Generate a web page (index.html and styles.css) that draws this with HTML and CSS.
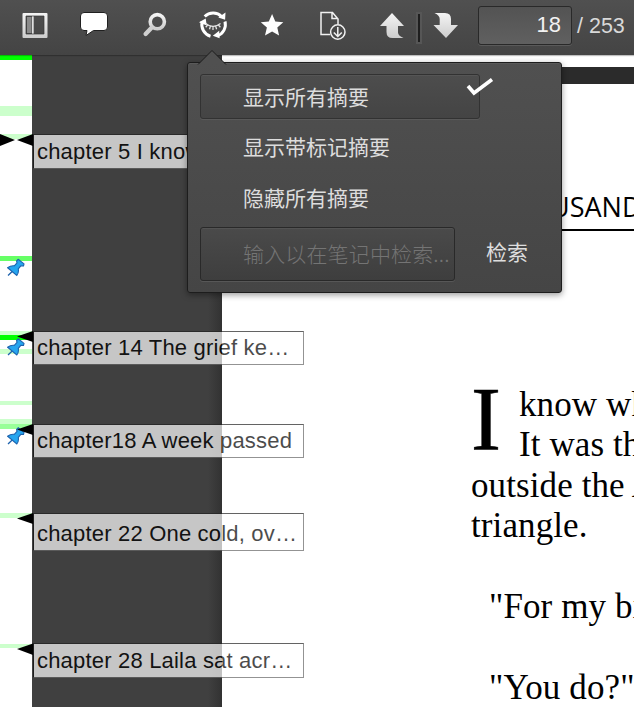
FILE: index.html
```html
<!DOCTYPE html>
<html lang="zh-CN">
<head>
<meta charset="utf-8">
<title>Reader</title>
<link rel="stylesheet" href="styles.css">
</head>
<body>
<svg width="0" height="0" class="defs">
  <defs>
    <linearGradient id="metal" x1="0" y1="0" x2="0" y2="1"><stop offset="0" stop-color="#f4f4f4"/><stop offset="1" stop-color="#cdcdcd"/></linearGradient>
    <symbol id="pin" viewBox="0 0 18 18"><path d="M6 12.200L1 17" stroke="#1d62ad" stroke-width="1.300"/><path d="M11.200 .8L17 5.400L16.500 7.500L13.800 7.300L11.300 10.500Q12 14 9.800 17L.600 9.200Q3.800 6.800 7.300 7.300L10 4.400L9.600 2.500Z" fill="#25a5ef" stroke="#1d62ad" stroke-width="1.100"/></symbol>
  </defs>
</svg>
<div class="app">
  <header class="toolbar">
    <svg class="icon" viewBox="0 0 30 30"><path fill-rule="evenodd" fill="url(#metal)" d="M3.500 2h23a1 1 0 0 1 1 1v23a1 1 0 0 1-1 1h-23a1 1 0 0 1-1-1V3a1 1 0 0 1 1-1zM6 5v18h18V5z"/><path d="M7 6h4.500v16H7z" fill="#8b8b8b"/><path d="M12 5h1.700v18H12z" fill="#e0e0e0"/><path d="M6 23V5h18v18z" fill="none" stroke="#373737" stroke-width=".7"/></svg>
    <svg class="icon comment" viewBox="0 0 30 30"><path d="M5 1.500h20q3.500 0 3.500 3.500v11q0 3.500-3.500 3.500H14.500L7 24.500 8 19.500H5q-3.500 0-3.500-3.500V5q0-3.500 3.500-3.500z" fill="#fff" stroke="#202020"/></svg>
    <svg class="icon search" viewBox="0 0 30 30"><circle cx="17.300" cy="10.700" r="7.100" fill="none" stroke="url(#metal)" stroke-width="3.600"/><path d="M11.800 16.500L5.600 23" stroke="#cfcfcf" stroke-width="4.300" stroke-linecap="round"/></svg>
    <svg class="icon eye" viewBox="0 0 30 30"><g fill="none" stroke="#fff" stroke-width="3"><path d="M6.700 5.500A12 12 0 0 1 23.700 5.700"/><path d="M27 10.500A12 12 0 0 1 19.500 24.800"/><path d="M12.500 25.300A12 12 0 0 1 4.300 10.500"/></g><path d="M27.500 1.500l-.4 7.300-6.800-2.200zM14.800 24.800l6.400-5 .4 7.500zM1 11.200l6.700-3.700 1 7z" fill="#fff"/><path d="M7.700 12.500Q15 18.500 22.500 12.500M9.700 14l-2 2.300M12.400 15.300l-.9 3M15 15.700V19M17.700 15.300l.9 3M20.400 14l2 2.300" fill="none" stroke="#e4e4e4" stroke-width="1.300"/></svg>
    <svg class="icon" viewBox="0 0 30 30"><path d="M15.100 3l3.200 7.400 8 .8-6 5.400 1.800 8-7-4.100-7.100 4.100 1.900-8-6.100-5.400 8-.8z" fill="#fff"/></svg>
    <svg class="icon doc" viewBox="0 0 30 30"><g fill="none" stroke="#f1f1f1" stroke-width="1.500"><path d="M12 23.500H3V1.500h11.500L20 8v5M14 1.500v6h6"/><circle cx="19.800" cy="21" r="7.200"/><path d="M19.800 16v9.200M15.800 21.500l4 4 4-4"/></g></svg>
    <svg class="icon up" viewBox="0 0 30 30"><path d="M15 2L27 15h-6v6.500q0 3 5.500 5.500H15.500Q9.500 27 9.500 21V15H3z" fill="url(#metal)"/></svg>
    <span class="divider"></span>
    <svg class="icon down" viewBox="0 0 30 30"><path d="M4.500 2H15q6 0 6 6v6h7L16 27 3.500 14h6.200V8q0-3.500-5.200-6z" fill="url(#metal)"/></svg>
    <div class="page-number">18</div>
    <span class="page-total">/ 253</span>
  </header>
  <main class="viewer">
    <aside class="strip">
      <svg class="marks" viewBox="0 0 32 652"><g fill="#ccffcc"><path d="M0 51h32v10H0zM0 79h32v5H0zM0 276h32v4H0zM0 294h32v5H0zM0 346h32v4H0zM0 364h32v5H0zM0 458h32v5H0zM0 589h32v4H0z"/></g><path d="M0 0h32v5H0zM0 280h32v5H0z" fill="#0f0"/><path d="M0 201h32v5H0z" fill="#66ff66"/><path d="M0 369h32v5H0z" fill="#99ff99"/><use href="#pin" x="7" y="203.500" width="18" height="18"/><use href="#pin" x="7" y="283" width="18" height="18"/><use href="#pin" x="7" y="372" width="18" height="18"/></svg>
    </aside>
    <section class="desk"></section>
    <article class="page">
      <div class="page-edge"></div>
      <div class="running-head">USAND</div>
      <p class="lead"><span class="dropcap">I</span><span class="line">know wh</span><span class="line">It was th</span><span class="line">outside the A</span><span class="line">triangle.</span></p>
      <p>"For my bi</p>
      <p>"You do?"</p>
    </article>
    <svg class="pointers" viewBox="0 0 33 652"><path d="M0 79L15 85 0 91zM33 79L17 85 33 91zM33 276L17 281.500 33 287zM33 369L17 374.500 33 380zM33 458L17 463.500 33 469zM33 588.500L17 594 33 600z"/></svg>
    <div class="note n5">chapter 5 I know</div>
    <div class="note n14">chapter 14 The grief ke…</div>
    <div class="note n18">chapter18 A week passed</div>
    <div class="note n22">chapter 22 One cold, ov…</div>
    <div class="note n28">chapter 28 Laila sat acr…</div>
  </main>
  <div class="menu">
    <svg class="arrow" viewBox="0 0 32 16"><path d="M1 15.500L15 1.500 29 15.500" fill="#505050" stroke="#1d1d1d"/></svg>
    <div class="item selected">显示所有摘要<svg class="check" viewBox="0 0 28 20"><path d="M2 9l6 7L26 2.500" fill="none" stroke="#fff" stroke-width="3.600"/></svg></div>
    <div class="item">显示带标记摘要</div>
    <div class="item">隐藏所有摘要</div>
    <div class="query"><div class="field">输入以在笔记中检索...</div><span class="submit">检索</span></div>
  </div>
</div>
</body>
</html>
```

FILE: styles.css
```css
* { box-sizing: border-box; }
body { margin: 0; background: #fff; overflow: hidden; font-family: "Liberation Sans", Arial, sans-serif; }
.defs { position: absolute; }
.app { position: relative; width: 634px; height: 707px; overflow: hidden; }

.toolbar { position: relative; z-index: 1; display: flex; align-items: center; height: 55px; padding-left: 20px; background: linear-gradient(#505050, #444); box-shadow: 0 1px 1px rgba(0,0,0,.25); }
.icon { flex: none; width: 30px; height: 30px; margin-top: -3px; margin-right: 29px; }
.comment { margin-right: 31px; }
.search { margin-right: 28px; }
.eye { margin-right: 29px; }
.doc { margin-left: 2px; }
.up { margin-right: 9px; }
.divider { flex: none; width: 6px; height: 32px; border: 2px solid #565656; background: #1e1e1e; margin-right: 8px; }
.down { margin-right: 18px; }
.page-number { flex: none; width: 94px; height: 39px; margin-top: -4px; padding-right: 10px; border: 1px solid #292929; border-radius: 3px; background: linear-gradient(#535353, #606060); box-shadow: 0 1px 0 #5a5a5a; color: #f2f2f2; font-size: 22px; line-height: 36px; text-align: right; }
.page-total { margin: -4px 0 0 5px; color: #d9d9d9; font-size: 21.500px; line-height: 30px; white-space: nowrap; }

.viewer { position: relative; display: flex; height: 652px; }
.strip { flex: none; width: 32px; background: #fff; }
.marks { display: block; width: 32px; height: 652px; }
.desk { flex: none; width: 190px; background: linear-gradient(90deg, transparent 176px, #323232), #404040; }
.pointers { position: absolute; left: 0; top: 0; width: 33px; height: 652px; }

.page { flex: none; width: 412px; overflow: hidden; background: #fff; color: #000; font: 35px/40.400px "Liberation Serif", "Times New Roman", serif; letter-spacing: .1px; white-space: nowrap; }
.page-edge { height: 17px; margin-top: 12px; background: #2b2b2b; }
.running-head { height: 147px; padding: 105px 0 0 328px; border-bottom: 2px solid #000; font: 27px/36px "Open Sans", "Noto Sans", sans-serif; letter-spacing: 0; }
.page p { margin: 40.400px 0 0; padding-left: 267px; }
.page .lead { margin-top: 154px; padding-left: 249px; }
.dropcap { float: left; width: 48px; height: 80px; font-size: 90px; line-height: 69px; -webkit-text-stroke: .6px #000; }
.line { display: block; }

.note { position: absolute; left: 33px; width: 271px; height: 34px; padding: 0 3px; border: 1px solid #666; border-top-color: #222; border-left-color: #111; background: #fff; opacity: .7; color: #000; font-size: 22px; line-height: 32px; letter-spacing: .19px; white-space: nowrap; overflow: hidden; }
.n5 { top: 79px; height: 35px; line-height: 33px; }
.n14 { top: 276px; }
.n18 { top: 369px; }
.n22 { top: 458px; height: 38px; line-height: 40px; }
.n28 { top: 588px; height: 35px; line-height: 34px; }

.menu { position: absolute; z-index: 2; left: 187px; top: 62px; width: 375px; height: 231px; padding: 11px 12px; border: 1px solid #1d1d1d; border-radius: 3px; background: linear-gradient(#505050, #454545); box-shadow: inset 0 1px 0 #5a5a5a, 0 2px 6px rgba(0,0,0,.4); color: #ddd; font: 400 21px/44px "Noto Sans CJK SC", sans-serif; }
.arrow { position: absolute; left: 9px; top: -14px; width: 32px; height: 16px; }
.item { position: relative; height: 51px; padding: 0 0 0 43px; }
.selected { width: 280px; height: 45px; margin-bottom: 5px; padding: 0 0 0 42px; border: 1px solid #323232; border-radius: 3px; background: linear-gradient(#4d4d4d, #444); box-shadow: 0 1px 0 #595959, inset 0 1px 0 #555; line-height: 42px; }
.check { position: absolute; left: 265px; top: 2px; width: 28px; height: 20px; }
.query { display: flex; align-items: center; margin-top: 1px; }
.field { width: 255px; height: 54px; padding-left: 42px; border: 1px solid #292929; border-radius: 3px; background: linear-gradient(#4a4a4a, #3e3e3e); box-shadow: 0 1px 0 #575757, inset 0 1px 0 #535353; color: #747474; font-weight: 300; line-height: 51px; letter-spacing: .15px; white-space: nowrap; }
.submit { margin-left: 31px; margin-top: -6px; }
```
